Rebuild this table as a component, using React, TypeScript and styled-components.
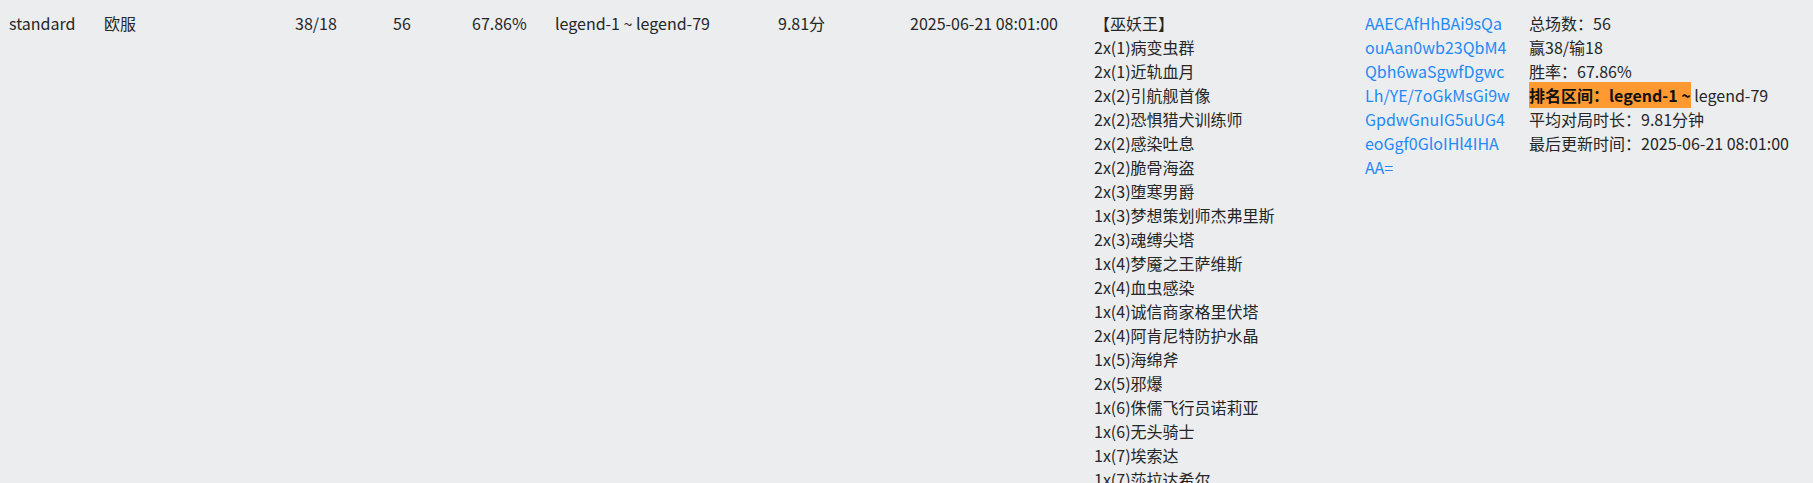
import React from 'react'
import styled, { createGlobalStyle } from 'styled-components'

const GlobalStyle = createGlobalStyle`
  html, body {
    margin: 0;
    padding: 0;
    background: #ebedef;
  }
  body {
    font-family: "Noto Sans CJK SC", "Noto Sans", sans-serif;
    font-size: 16px;
    color: #262626;
  }
`

const deckCode = [
  'AAECAfHhBAi9sQa',
  'ouAan0wb23QbM4',
  'Qbh6waSgwfDgwc',
  'Lh/YE/7oGkMsGi9w',
  'GpdwGnuIG5uUG4',
  'eoGgf0GloIHl4IHA',
  'AA=',
]

const cards = [
  '2x(1)病变虫群',
  '2x(1)近轨血月',
  '2x(2)引航舰首像',
  '2x(2)恐惧猎犬训练师',
  '2x(2)感染吐息',
  '2x(2)脆骨海盗',
  '2x(3)堕寒男爵',
  '1x(3)梦想策划师杰弗里斯',
  '2x(3)魂缚尖塔',
  '1x(4)梦魇之王萨维斯',
  '2x(4)血虫感染',
  '1x(4)诚信商家格里伏塔',
  '2x(4)阿肯尼特防护水晶',
  '1x(5)海绵斧',
  '2x(5)邪爆',
  '1x(6)侏儒飞行员诺莉亚',
  '1x(6)无头骑士',
  '1x(7)埃索达',
  '1x(7)莎拉达希尔',
]

function App() {
  return (
    <>
      <GlobalStyle />
      <Row>
        <Cell>standard</Cell>
        <Cell>欧服</Cell>
        <Cell>38/18</Cell>
        <Cell>56</Cell>
        <Cell>67.86%</Cell>
        <Cell>legend-1 ~ legend-79</Cell>
        <Cell>9.81分</Cell>
        <Cell>2025-06-21 08:01:00</Cell>
        <Cell>
          <Line>【巫妖王】</Line>
          {cards.map((c) => (
            <Line key={c}>{c}</Line>
          ))}
        </Cell>
        <Cell>
          <CodeLink href="#">
            {deckCode.map((part) => (
              <Line key={part}>{part}</Line>
            ))}
          </CodeLink>
        </Cell>
        <Cell>
          <Line>总场数：56</Line>
          <Line>赢38/输18</Line>
          <Line>胜率：67.86%</Line>
          <Line>
            <Mark>排名区间：legend-1 ~</Mark> legend-79
          </Line>
          <Line>平均对局时长：9.81分钟</Line>
          <Line>最后更新时间：2025-06-21 08:01:00</Line>
        </Cell>
      </Row>
    </>
  )
}

export default App

const Row = styled.div`
  display: grid;
  grid-template-columns: 95px 191px 98px 79px 83px 223px 132px 184px 271px 164px 1fr;
  align-items: start;
  padding: 11px 0 0 9px;
  line-height: 24px;
`

const Cell = styled.div`
  white-space: nowrap;
`

const Line = styled.div`
  height: 24px;
`

const CodeLink = styled.a`
  display: block;
  color: #1f8af5;
  text-decoration: none;
`

const Mark = styled.span`
  background: #ff9a33;
  color: #111;
  font-weight: 700;
  padding: 1px 0;
`
